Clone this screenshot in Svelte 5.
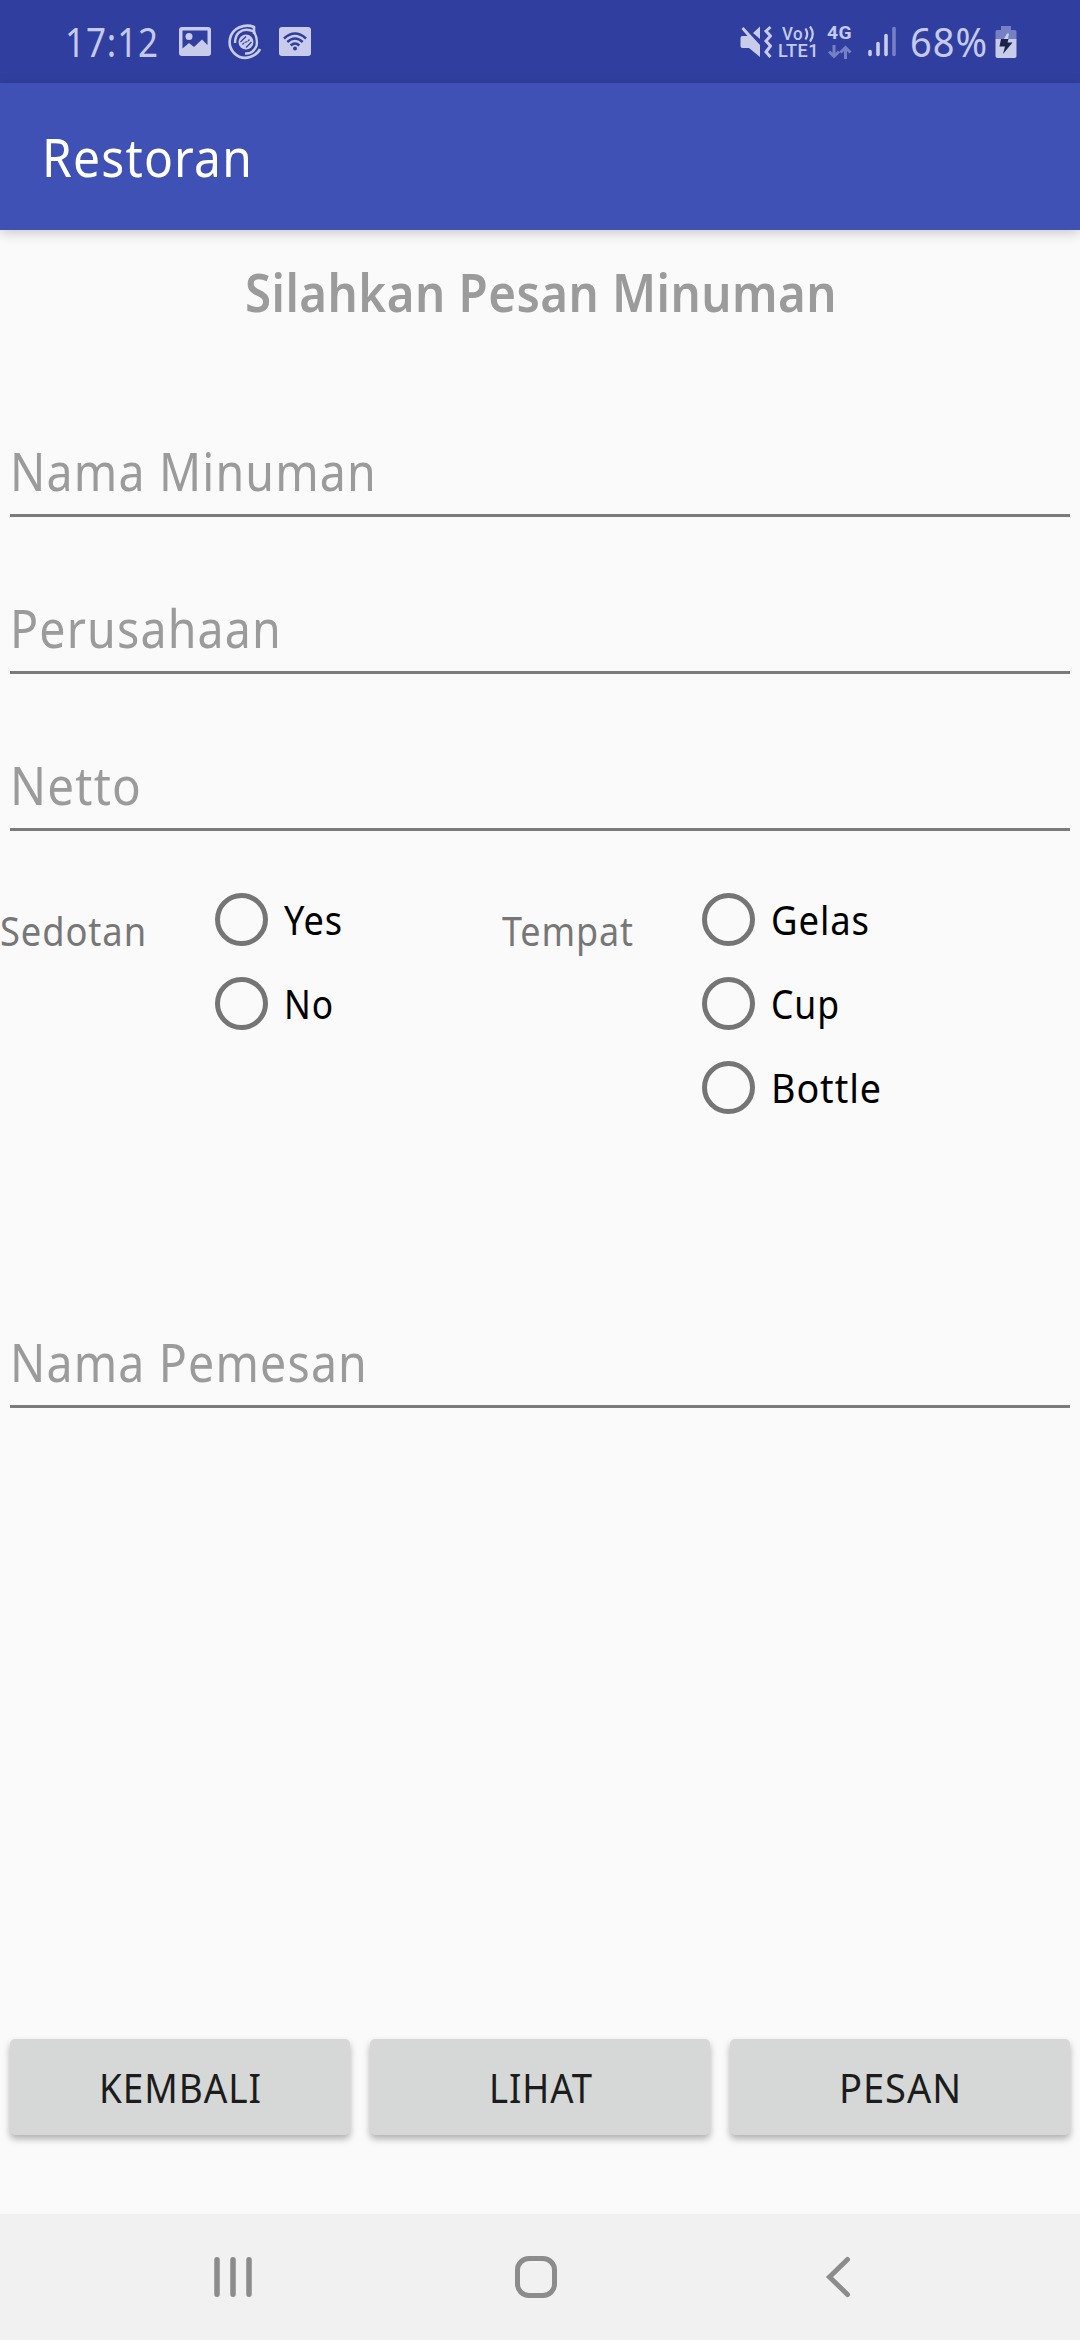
<script>
  const fields = [
    { label: 'Nama Minuman', width: 367 },
    { label: 'Perusahaan', width: 272 },
    { label: 'Netto', width: 132 }
  ];
  const groups = [
    { label: 'Sedotan', width: 147, options: [{ label: 'Yes', width: 59 }, { label: 'No', width: 50 }] },
    {
      label: 'Tempat',
      width: 132,
      options: [{ label: 'Gelas', width: 99 }, { label: 'Cup', width: 69 }, { label: 'Bottle', width: 111 }]
    }
  ];
  const buttons = [
    { label: 'KEMBALI', width: 163 },
    { label: 'LIHAT', width: 104 },
    { label: 'PESAN', width: 123 }
  ];

  // Condenses a text run horizontally so that it takes up the given width.
  function fit(node, width) {
    const natural = node.getBoundingClientRect().width;
    node.style.transform = `scaleX(${width / natural})`;
    node.style.marginRight = `${width - natural}px`;
  }
</script>

{#snippet field(item)}
  <div class="field"><span class="run" use:fit={item.width}>{item.label}</span></div>
{/snippet}

<div class="screen">
  <div class="status">
    <div class="left">
      <span class="run clock" use:fit={94}>17:12</span>
      <svg class="gallery" width="32" height="30" viewBox="0 0 32 30">
        <path fill-rule="evenodd" fill="#c8cbea" d="M3 0H29Q32 0 32 3V26Q32 29 29 29H3Q0 29 0 26V3Q0 0 3 0ZM3.500 3.500V21.500L10 16L15 20L23 12.500L28.500 18V3.500Z" />
        <circle cx="10" cy="9.500" r="3.500" fill="#c8cbea" />
      </svg>
      <svg class="swirl" width="34" height="36" viewBox="0 0 34 36" fill="none" stroke="#c8cbea">
        <path stroke-width="2.600" d="M26 10V3Q19 0 11 3.500A16 16 0 0 0 6 29Q13 36 22 33Q30 30 32 25" />
        <path stroke-width="2.400" d="M26 7.500Q17 3.500 11 8.500Q7 12 7 19M17 29.500Q25 30 28.500 22Q30 15 26 7.500" />
        <circle cx="18" cy="18" r="7.500" fill="#c8cbea" stroke="none" />
        <path stroke="#303f9f" stroke-width="1.200" d="M12.500 18L18 12.500M14.500 20.500L16 19M18 23.500L23.500 18M20 17L21.500 15.500M16.500 18.500L19.500 17.500" />
      </svg>
      <svg class="wifi" width="32" height="30" viewBox="0 0 32 30" fill="none" stroke="#303f9f" stroke-width="2.500">
        <rect width="32" height="29" rx="3" fill="#c8cbea" stroke="none" />
        <path d="M5 11.500Q16 1.500 27 11.500M8.300 15Q16 8 23.700 15M11.700 18.500Q16 14.500 20.300 18.500" />
        <circle cx="16" cy="21.500" r="2" fill="#303f9f" stroke="none" />
      </svg>
    </div>
    <div class="right">
      <svg class="mute" width="32" height="34" viewBox="0 0 32 34">
        <path fill="#c8cbea" d="M2.500 11H7.500L1.500 4L3.500 2L20 20V32L9 23H2.500Q.5 23 .5 21V13Q.5 11 2.500 11ZM13 8L20 1.500V14Z" />
        <path fill="none" stroke="#c8cbea" stroke-width="3" d="M30.500 2L26 6L30.500 11L26 16L30.500 21L26 27L30.500 32" />
      </svg>
      <div class="volte">
        <div class="vo">
          <span class="run" use:fit={21}>Vo</span>
          <svg width="12" height="18" viewBox="0 0 12 18" fill="none" stroke="#c5caec" stroke-width="2.200">
            <path d="M1.500 3.500Q5 9 1.500 14.500M6 1.500Q11.500 9 6 16.500" />
          </svg>
        </div>
        <div class="lte"><span class="run" use:fit={41}>LTE1</span></div>
      </div>
      <div class="net">
        <span class="run g4" use:fit={25}>4G</span>
        <svg width="24" height="14" viewBox="0 0 24 14" fill="none" stroke="#7680c5" stroke-width="3">
          <path d="M6 0V11M1 6.500L6 11.500L11 6.500M17.500 14V3M12.500 7.500L17.500 2.500L22.500 7.500" />
        </svg>
      </div>
      <svg class="signal" width="28" height="31" viewBox="0 0 28 31" stroke="#c8cbea" stroke-width="3.600" stroke-linecap="round">
        <path d="M2 25.500V28.500M10 17.500V28.500M18 9.500V28.500" />
        <path stroke="#7680c5" d="M26 2.500V28.500" />
      </svg>
      <span class="run percent" use:fit={78}>68%</span>
      <svg class="battery" width="22" height="34" viewBox="0 0 22 34">
        <path fill="#7680c5" d="M6 1H16V5H20Q21.500 5 21.500 7V14H.5V7Q.5 5 2 5H6Z" />
        <path fill="#c8cbea" d="M.5 14H21.500V31Q21.500 33 19.500 33H2.500Q.5 33 .5 31Z" />
        <path fill="#c8cbea" d="M9 14L12 8.500H14L13 14Z" />
        <path fill="#1b2348" d="M6 14H13.500L12.500 17.500H17.500L8 29L10 21.500H4.500Z" />
      </svg>
    </div>
  </div>

  <header><span class="run" use:fit={211}>Restoran</span></header>

  <main>
    <h1><span class="run" use:fit={592}>Silahkan Pesan Minuman</span></h1>
    {#each fields as item}
      {@render field(item)}
    {/each}
    <div class="choices">
      {#each groups as group}
        <div class="caption"><span class="run" use:fit={group.width}>{group.label}</span></div>
        <div class="options">
          {#each group.options as option}
            <div class="option">
              <i class="radio"></i>
              <span class="run" use:fit={option.width}>{option.label}</span>
            </div>
          {/each}
        </div>
      {/each}
    </div>
    {@render field({ label: 'Nama Pemesan', width: 358 })}
    <div class="buttons">
      {#each buttons as button}
        <button type="button"><span class="run" use:fit={button.width}>{button.label}</span></button>
      {/each}
    </div>
  </main>

  <nav>
    <svg width="40" height="44" viewBox="0 0 40 44" stroke="#8c8c8c" stroke-width="5.500" stroke-linecap="round">
      <path d="M4 4.750V39.250M20 4.750V39.250M36 4.750V39.250" />
    </svg>
    <svg class="home" width="44" height="44" viewBox="0 0 44 44" fill="none" stroke="#8c8c8c" stroke-width="5">
      <rect x="3.500" y="3.500" width="37" height="37" rx="11.500" />
    </svg>
    <svg width="28" height="44" viewBox="0 0 28 44" fill="none" stroke="#8c8c8c" stroke-width="5" stroke-linecap="round">
      <path d="M23.500 4.500L5.500 22L23.500 39.500" />
    </svg>
  </nav>
</div>

<style>
  :global(body) {
    margin: 0;
    background: #fafafa;
  }
  .screen {
    display: flex;
    flex-direction: column;
    width: 1080px;
    height: 2340px;
    overflow: hidden;
    background: #fafafa;
    font-family: 'Noto Sans', 'Open Sans', sans-serif;
    font-weight: 400;
  }
  .run {
    display: inline-block;
    flex: none;
    white-space: nowrap;
    letter-spacing: 0.025em;
    transform-origin: left center;
  }
  svg {
    display: block;
    flex: none;
  }
  .status {
    display: flex;
    justify-content: space-between;
    align-items: center;
    box-sizing: border-box;
    height: 83px;
    padding: 0 63px 0 65px;
    background: #303f9f;
    color: #c5caec;
    font-size: 40px;
    line-height: 83px;
  }
  .left,
  .right {
    display: flex;
    align-items: center;
  }
  .gallery {
    margin-left: 20px;
  }
  .swirl,
  .wifi {
    margin-left: 17px;
  }
  .volte {
    margin-left: 6px;
    width: 41px;
    font-family: Roboto, sans-serif;
    font-weight: 500;
  }
  .vo {
    display: flex;
    align-items: center;
    justify-content: center;
    gap: 1px;
    height: 18px;
    font-size: 18px;
    line-height: 18px;
  }
  .lte {
    height: 16px;
    font-size: 17.5px;
    line-height: 16px;
  }
  .net {
    display: flex;
    flex-direction: column;
    align-items: center;
    gap: 4px;
    margin-left: 8px;
    padding-top: 2px;
    width: 25px;
    font-family: Roboto, sans-serif;
    font-weight: 700;
  }
  .g4 {
    font-size: 18.5px;
    line-height: 15px;
  }
  .signal {
    margin-left: 15.5px;
  }
  .percent {
    margin-left: 14.5px;
  }
  .battery {
    margin-left: 7px;
  }
  header {
    position: relative;
    z-index: 1;
    height: 147px;
    padding-left: 42px;
    background: #3f51b5;
    box-shadow: 0 3px 12px rgba(0, 0, 0, 0.2);
    color: #fff;
    font-size: 53px;
    line-height: 147px;
  }
  main {
    display: flex;
    flex: 1;
    flex-direction: column;
  }
  h1 {
    height: 130px;
    margin: 0;
    padding-left: 2px;
    color: #9b9b9b;
    font-size: 53px;
    font-weight: 600;
    line-height: 123px;
    text-align: center;
  }
  h1 .run {
    letter-spacing: 0.01em;
  }
  .field {
    box-sizing: border-box;
    height: 157px;
    margin: 0 10px;
    padding-top: 68px;
    border-bottom: 3px solid #7b7b7b;
    color: #9b9b9b;
    font-size: 52px;
    line-height: 86px;
  }
  .choices {
    display: grid;
    grid-template-columns: 214.5px 287px 200.5px 1fr;
    box-sizing: border-box;
    height: 420px;
    padding-top: 46px;
    font-size: 40px;
    line-height: 86px;
  }
  .caption {
    margin-top: 11px;
    color: #777;
  }
  .options {
    color: #000;
  }
  .option {
    display: flex;
    align-items: center;
    height: 84px;
  }
  .option .run {
    padding-top: 2px;
    line-height: 84px;
  }
  .radio {
    box-sizing: border-box;
    flex: none;
    width: 53px;
    height: 53px;
    margin-right: 16px;
    border: 5.5px solid #757575;
    border-radius: 50%;
  }
  .buttons {
    display: grid;
    grid-template-columns: repeat(3, 1fr);
    gap: 20px;
    margin-top: auto;
    padding: 0 10px 79px;
  }
  button {
    height: 96px;
    padding: 2px 0 0 1px;
    border: 0;
    border-radius: 5px;
    background: #d6d8d7;
    box-shadow: 0 4px 7px rgba(0, 0, 0, 0.3);
    color: #1c1c1c;
    font-family: inherit;
    font-size: 40px;
    font-weight: inherit;
    line-height: 94px;
  }
  nav {
    display: flex;
    align-items: center;
    justify-content: space-between;
    box-sizing: border-box;
    height: 126px;
    padding: 0 228px 0 213px;
    background: #f1f1f1;
  }
  .home {
    margin-right: 6px;
  }
</style>
